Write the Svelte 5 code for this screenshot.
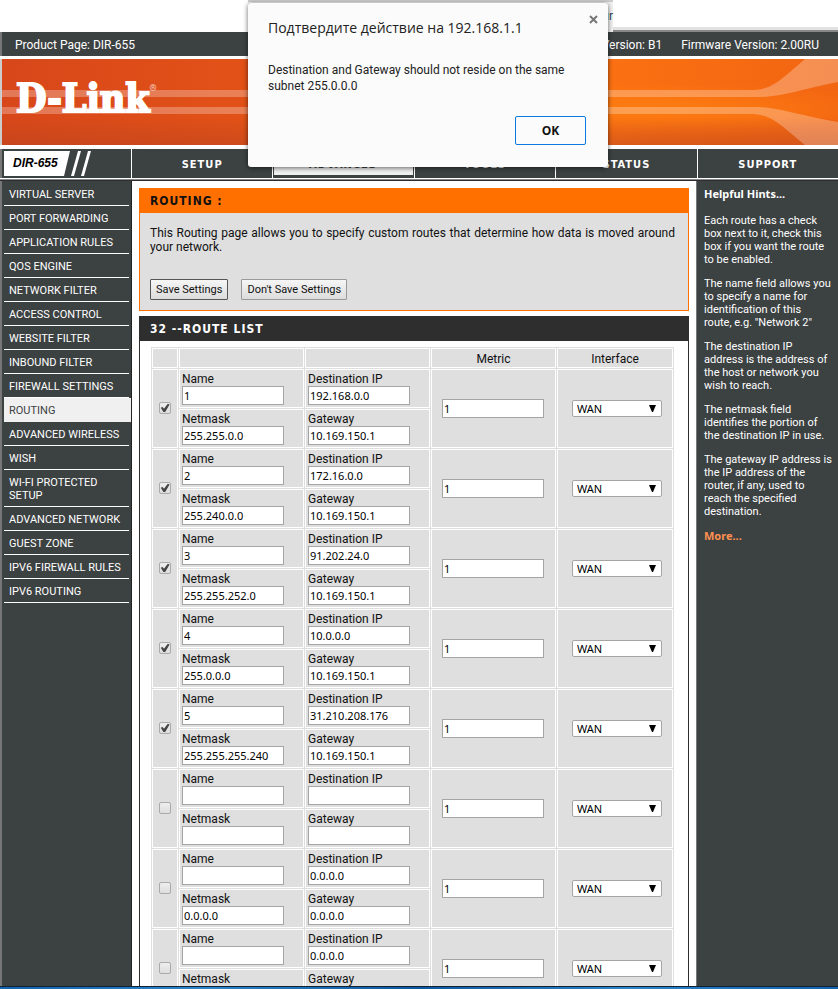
<script>
  const tabs = ['SETUP', 'ADVANCED', 'TOOLS', 'STATUS', 'SUPPORT'];
  const menu = [
    'VIRTUAL SERVER', 'PORT FORWARDING', 'APPLICATION RULES', 'QOS ENGINE',
    'NETWORK FILTER', 'ACCESS CONTROL', 'WEBSITE FILTER', 'INBOUND FILTER',
    'FIREWALL SETTINGS', 'ROUTING', 'ADVANCED WIRELESS', 'WISH',
    'WI-FI PROTECTED SETUP', 'ADVANCED NETWORK', 'GUEST ZONE',
    'IPV6 FIREWALL RULES', 'IPV6 ROUTING'
  ];
  const hints = [
    'Each route has a check box next to it, check this box if you want the route to be enabled.',
    'The name field allows you to specify a name for identification of this route,\u00a0e.g. "Network 2"',
    'The destination IP address is the address of the host or network you wish to reach.',
    'The netmask field identifies the portion of the destination IP in use.',
    'The gateway IP address is the IP address of the router, if any, used to reach the specified destination.'
  ];

  let routes = $state([
    { on: true, name: '1', dest: '192.168.0.0', mask: '255.255.0.0', gateway: '10.169.150.1', metric: '1' },
    { on: true, name: '2', dest: '172.16.0.0', mask: '255.240.0.0', gateway: '10.169.150.1', metric: '1' },
    { on: true, name: '3', dest: '91.202.24.0', mask: '255.255.252.0', gateway: '10.169.150.1', metric: '1' },
    { on: true, name: '4', dest: '10.0.0.0', mask: '255.0.0.0', gateway: '10.169.150.1', metric: '1' },
    { on: true, name: '5', dest: '31.210.208.176', mask: '255.255.255.240', gateway: '10.169.150.1', metric: '1' },
    { on: false, name: '', dest: '', mask: '', gateway: '', metric: '1' },
    { on: false, name: '', dest: '0.0.0.0', mask: '0.0.0.0', gateway: '0.0.0.0', metric: '1' },
    { on: false, name: '', dest: '0.0.0.0', mask: '0.0.0.0', gateway: '0.0.0.0', metric: '1' }
  ]);
  let alertOpen = $state(true);
</script>

<div class="screen">
  <div class="page">
    <div class="browser"><span class="tail">ur</span><span class="edge"></span></div>

    <div class="product">
      <span>Product Page: DIR-655</span>
      <span class="hw">Hardware Version: B1</span>
      <span>Firmware Version: 2.00RU</span>
    </div>

    <div class="banner">
      <svg class="waves" viewBox="0 0 836 86" preserveAspectRatio="none" aria-hidden="true">
        <defs>
          <linearGradient id="base" x1="0" x2="1" y1="0" y2="0">
            <stop offset="0" stop-color="#d8471a" />
            <stop offset=".3" stop-color="#e25217" />
            <stop offset=".73" stop-color="#fb7012" />
            <stop offset="1" stop-color="#f26512" />
          </linearGradient>
          <radialGradient id="glow" cx=".78" cy=".58" r=".3">
            <stop offset="0" stop-color="#ff8010" stop-opacity=".8" />
            <stop offset="1" stop-color="#ff8010" stop-opacity="0" />
          </radialGradient>
          <linearGradient id="shade" x1="0" x2="0" y1="0" y2="1">
            <stop offset=".68" stop-color="#b84420" stop-opacity="0" />
            <stop offset="1" stop-color="#b84420" stop-opacity=".5" />
          </linearGradient>
        </defs>
        <rect width="836" height="86" fill="url(#base)" />
        <rect width="836" height="86" fill="url(#glow)" />
        <rect width="836" height="86" fill="url(#shade)" />
        <g fill="#fff" fill-opacity=".27">
          <path d="M0 31H748C770 31 776 23 803 0H836V23C800 30 780 38 756 38H0Z" />
          <path d="M0 48H752C778 48 798 57 836 63V86H803C778 66 770 55 748 55H0Z" />
        </g>
      </svg>
      <span class="logo">D-Link</span><span class="reg">®</span>
    </div>

    <nav class="tabs">
      <div class="model">
        <span class="plate">DIR-655</span>
        <svg width="22" height="25" viewBox="0 0 22 25" aria-hidden="true">
          <path d="M1 25L8 0H11L4 25ZM11 25L18 0H21L14 25Z" fill="#fff" />
        </svg>
      </div>
      {#each tabs as tab}
        <a href="#{tab}" class:active={tab === 'ADVANCED'}>{tab}</a>
      {/each}
    </nav>

    <div class="body">
      <nav class="side">
        {#each menu as item}
          <a href="#{item}" class:current={item === 'ROUTING'}>{item}</a>
        {/each}
      </nav>

      <main>
        <section class="intro">
          <h1>ROUTING :</h1>
          <div class="text">
            <p>This Routing page allows you to specify custom routes that determine how data is moved around your network.</p>
            <button type="button" class="strong">Save Settings</button>
            <button type="button">Don't Save Settings</button>
          </div>
        </section>

        <section class="list">
          <h2>32 --ROUTE LIST</h2>
          <table>
            <colgroup>
              <col class="check"><col class="field"><col class="field"><col class="field"><col>
            </colgroup>
            <thead>
              <tr><th></th><th></th><th></th><th>Metric</th><th>Interface</th></tr>
            </thead>
            <tbody>
              {#each routes as route, i}
                <tr>
                  <td rowspan="2">
                    <input type="checkbox" bind:checked={route.on} aria-label="Enable route {i + 1}">
                  </td>
                  <td><label for="name{i}">Name</label><input id="name{i}" type="text" bind:value={route.name}></td>
                  <td><label for="dest{i}">Destination IP</label><input id="dest{i}" type="text" bind:value={route.dest}></td>
                  <td rowspan="2" class="metric">
                    <input type="text" bind:value={route.metric} aria-label="Metric">
                  </td>
                  <td rowspan="2" class="iface">
                    <select aria-label="Interface"><option>WAN</option></select>
                  </td>
                </tr>
                <tr>
                  <td><label for="mask{i}">Netmask</label><input id="mask{i}" type="text" bind:value={route.mask}></td>
                  <td><label for="gw{i}">Gateway</label><input id="gw{i}" type="text" bind:value={route.gateway}></td>
                </tr>
              {/each}
            </tbody>
          </table>
        </section>
      </main>

      <aside>
        <h3>Helpful Hints...</h3>
        {#each hints as hint}
          <p>{hint}</p>
        {/each}
        <a href="#more">More...</a>
      </aside>
    </div>
  </div>
  <div class="taskbar"></div>

  {#if alertOpen}
    <div class="alert" role="alertdialog" aria-labelledby="alert-title">
      <button type="button" class="close" aria-label="Close" onclick={() => (alertOpen = false)}>
        <svg width="9" height="9" viewBox="0 0 9 9"><path d="M1 1L8 8M8 1L1 8" stroke="#777" stroke-width="2" /></svg>
      </button>
      <h4 id="alert-title">Подтвердите действие на 192.168.1.1</h4>
      <p>Destination and Gateway should not reside on the same subnet 255.0.0.0</p>
      <button type="button" class="ok" onclick={() => (alertOpen = false)}>OK</button>
    </div>
  {/if}
</div>

<style>
  :global(body) {
    margin: 0;
    background: #fff;
  }

  .screen {
    position: relative;
    display: flex;
    flex-direction: column;
    height: 100vh;
    overflow: hidden;
    font: 12px/14px Tahoma, Roboto, sans-serif;
    color: #111;
  }
  .page {
    flex: 1;
    min-height: 0;
    display: flex;
    flex-direction: column;
    overflow: hidden;
  }
  a { text-decoration: none; }
  h1, h2, h3, h4, p { margin: 0; }

  /* strip of the browser window above the page */
  .browser {
    flex: none;
    display: flex;
    align-items: flex-end;
    height: 32px;
  }
  .tail {
    box-sizing: border-box;
    width: 365px;
    height: 32px;
    margin-left: 248px;
    padding-top: 7px;
    border-top: 2px solid #ccc;
    background: #f1f1f1;
    color: #345;
    text-align: right;
  }
  .edge {
    flex: 1;
    height: 3px;
    background: #e2e2e2;
    border-bottom: 2px solid #888;
  }

  .product {
    flex: none;
    display: flex;
    gap: 19px;
    padding: 2px 19px 0 13px;
    border-left: 2px solid #777;
    background: #3c4142;
    color: #fff;
    line-height: 22px;
  }
  .hw { margin-left: auto; }

  .banner {
    flex: none;
    position: relative;
    display: flex;
    align-items: flex-start;
    height: 86px;
    margin: 3px 0 4px;
    padding-left: 14px;
    border-left: 2px solid #ccc;
    color: #fff;
  }
  .waves {
    position: absolute;
    inset: 0;
    width: 100%;
    height: 100%;
  }
  .logo {
    position: relative;
    font: bold 39px/78px "DejaVu Serif Condensed", "DejaVu Serif", serif;
    -webkit-text-stroke: 2px #fff;
  }
  .reg {
    position: relative;
    padding-top: 22px;
    font-size: 9px;
    opacity: .7;
  }

  .tabs {
    flex: none;
    display: grid;
    grid-template-columns: 131px repeat(5, 1fr);
    height: 29px;
    background: #3c4142;
    border-bottom: 1px solid #fff;
    box-shadow: 0 1px #888, 0 2px #2d2d2d;
    margin-bottom: 2px;
  }
  .model {
    display: flex;
    align-items: center;
    padding-left: 2px;
    border-left: 2px solid #777;
  }
  .plate {
    width: 66px;
    padding-left: 9px;
    box-sizing: border-box;
    background: #fff;
    clip-path: polygon(0 0, 100% 0, 60px 100%, 0 100%);
    color: #000;
    font: italic bold 12px/25px "Liberation Sans", Arial, sans-serif;
  }
  .tabs a {
    display: flex;
    justify-content: center;
    height: 23px;
    padding: 3px 1px;
    border-left: 1px solid #fff;
    color: #fff;
    font: bold 11px/25px "DejaVu Sans Condensed", "DejaVu Sans", sans-serif;
    letter-spacing: 1px;
  }
  .tabs a.active {
    background: #f0f0f0 content-box;
    color: #3c4142;
  }

  .body {
    flex: 1;
    min-height: 0;
    display: grid;
    grid-template-columns: 132px 1fr 142px;
  }
  .side {
    padding: 1px 0 0 2px;
    border-left: 2px solid #777;
    border-right: 1px solid #222;
    background: #3c4142;
    font-size: 11px;
    line-height: 13px;
  }
  .side a {
    display: block;
    margin-right: 2px;
    padding: 6px 4px 4px 5px;
    border-bottom: 1px solid #fff;
    color: #fff;
  }
  .side a.current {
    margin-right: 0;
    background: #f0f0f0;
    border-color: #f0f0f0;
    color: #3c4142;
  }

  main {
    padding: 7px;
    background: #fff;
  }
  h1, h2 {
    padding: 2px 0 0 10px;
    font: bold 12px/23px "DejaVu Sans Condensed", "DejaVu Sans", sans-serif;
    letter-spacing: 1px;
  }
  .intro {
    border: 1px solid #ff7000;
    border-top: 0;
    margin-bottom: 5px;
    background: #dfdfdf;
  }
  h1 { background: #ff7000; }
  .text { padding: 13px 13px 10px 10px; }
  .text p {
    margin-bottom: 25px;
    text-align: justify;
  }
  .text button {
    height: 21px;
    margin-right: 10px;
    padding: 0 5px;
    border: 1px solid #999;
    border-radius: 1px;
    background: linear-gradient(#f6f6f6, #dcdcdc);
    color: #111;
    font: 11px/16px Tahoma, Roboto, sans-serif;
  }
  .text button.strong { border-color: #555; }

  .list {
    border: 1px solid #2d2d2d;
    border-top: 0;
  }
  h2 {
    background: #2e2e2e;
    color: #fff;
  }
  table {
    width: 523px;
    margin: 6px 11px;
    table-layout: fixed;
    border-spacing: 1px;
    background: #dfdfdf;
  }
  col.check { width: 26px; }
  col.field { width: 125px; }
  th, td {
    box-sizing: border-box;
    padding: 2px;
    border: 1px solid #fff;
    text-align: left;
  }
  th {
    height: 20px;
    padding: 1px 0 0;
    font-weight: normal;
    text-align: center;
  }
  td.metric { padding-left: 10px; }
  td.iface { padding-left: 14px; }
  td label {
    display: block;
    padding-top: 1px;
    line-height: 13px;
  }
  input[type="text"] {
    display: block;
    box-sizing: border-box;
    width: 102px;
    height: 19px;
    padding: 0 1px;
    border: 1px solid #a5a5a5;
    background: #fff;
    color: #000;
    font: 11px/15px Tahoma, "Noto Sans", sans-serif;
  }
  input[type="checkbox"] {
    display: block;
    appearance: none;
    box-sizing: border-box;
    width: 12px;
    height: 12px;
    margin: 0 auto 1px;
    border: 1px solid #aaa;
    border-radius: 2px;
    background: linear-gradient(#eee, #ddd);
  }
  input[type="checkbox"]:checked::before {
    content: "";
    display: block;
    width: 10px;
    height: 10px;
    background: #444;
    clip-path: polygon(8% 48%, 26% 40%, 40% 58%, 78% 8%, 96% 14%, 52% 90%, 34% 90%);
  }
  select {
    display: block;
    appearance: none;
    box-sizing: border-box;
    width: 90px;
    height: 17px;
    padding: 0 4px;
    border: 1px solid #a5a5a5;
    border-radius: 2px;
    background: #fff url("data:image/svg+xml,%3Csvg xmlns='http://www.w3.org/2000/svg' width='7' height='7'%3E%3Cpath d='M0 0H7L4 7H3Z'/%3E%3C/svg%3E") no-repeat right 5px top 4px;
    color: #000;
    font: 11px/15px Tahoma, "Noto Sans", sans-serif;
  }

  aside {
    padding: 6px 4px 0 7px;
    border-left: 1px solid #777;
    background: #3c4142;
    color: #fff;
    font-size: 11px;
    line-height: 13px;
  }
  h3 {
    margin-bottom: 14px;
    font: bold 11px/13px "Noto Sans", sans-serif;
  }
  aside p { margin-bottom: 11px; }
  aside a {
    color: #ff9050;
    font: bold 11px/13px "Noto Sans", sans-serif;
  }

  .taskbar {
    flex: none;
    height: 2px;
    border-top: 1px solid #123;
    background: linear-gradient(90deg, #1464b4, #2a86cc, #0d57a5, #2a86cc, #1464b4);
  }

  .alert {
    position: absolute;
    top: 3px;
    left: 248px;
    box-sizing: border-box;
    width: 360px;
    height: 164px;
    padding: 15px 22px 22px 20px;
    display: flex;
    flex-direction: column;
    border-radius: 3px;
    background: #fbfbfb;
    box-shadow: 0 1px 5px rgba(0, 0, 0, .6);
    color: #222;
  }
  h4 {
    font: 14px/20px "Segoe UI", "Open Sans", sans-serif;
  }
  .alert p {
    margin-top: 24px;
    line-height: 16px;
  }
  .ok {
    align-self: flex-end;
    width: 71px;
    height: 29px;
    margin-top: auto;
    border: 1px solid #0a7ae0;
    border-radius: 2px;
    background: #fbfbfb;
    color: #111;
    font: bold 12px/16px "Segoe UI", "Open Sans", sans-serif;
  }
  .close {
    position: absolute;
    top: 12px;
    right: 10px;
    display: flex;
    padding: 0;
    border: 0;
    background: none;
  }
</style>
